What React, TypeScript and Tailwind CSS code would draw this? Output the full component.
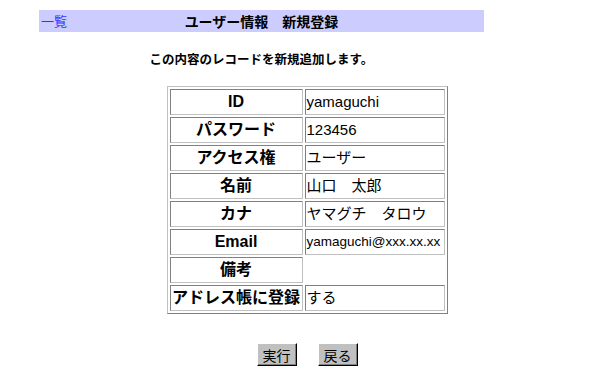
import React from "react";

type Row = {
  label: string;
  value: string;
  small?: boolean;
};

const rows: Row[] = [
  { label: "ID", value: "yamaguchi" },
  { label: "パスワード", value: "123456" },
  { label: "アクセス権", value: "ユーザー" },
  { label: "名前", value: "山口　太郎" },
  { label: "カナ", value: "ヤマグチ　タロウ" },
  { label: "Email", value: "yamaguchi@xxx.xx.xx", small: true },
  { label: "備考", value: "" },
  { label: "アドレス帳に登録", value: "する" },
];

const cellBorder =
  "border border-t-[#808080] border-l-[#808080] border-b-[#c0c0c0] border-r-[#c0c0c0]";

function WinButton({ children }: { children: React.ReactNode }) {
  return (
    <button
      type="button"
      className="h-[23px] px-[5px] bg-[#c0c0c0] border border-t-white border-l-white border-b-black border-r-black shadow-[inset_-1px_-1px_0_#808080] text-[14px] leading-[20px] text-black font-['Noto_Sans_CJK_JP',sans-serif]"
    >
      {children}
    </button>
  );
}

export default function App() {
  return (
    <div className="w-[614px] h-[376px] bg-white text-black font-['Liberation_Sans','Noto_Sans_CJK_JP',sans-serif]">
      <div className="pt-[10px] pl-[39px]">
        <div className="w-[445px] h-[22px] bg-[#ccccff] grid grid-cols-[1fr_auto_1fr] items-center">
          <a href="#" className="pl-[2px] text-[13px] leading-[22px] text-[#3333ff] font-['Noto_Sans_CJK_JP',sans-serif]">
            一覧
          </a>
          <h1 className="text-[14px] leading-[22px] font-bold font-['Noto_Sans_CJK_JP',sans-serif] whitespace-nowrap">
            ユーザー情報　新規登録
          </h1>
          <div />
        </div>
        <p className="w-[445px] mt-[20px] h-[14px] text-center text-[12.5px] leading-[14px] font-bold font-['Noto_Sans_CJK_JP',sans-serif]">
          この内容のレコードを新規追加します。
        </p>
      </div>

      <table className="mx-auto mt-[20px] border-separate border-spacing-[2px] border border-t-[#c0c0c0] border-l-[#c0c0c0] border-b-[#808080] border-r-[#808080]">
        <tbody>
          {rows.map((row) => (
            <tr key={row.label}>
              <td
                className={`${cellBorder} w-[133px] h-[26px] p-[1px] text-center align-middle text-[16px] leading-[20px] font-bold whitespace-nowrap`}
              >
                {row.label}
              </td>
              {/* empty cells show no border, like the old table */}
              <td
                className={`${
                  row.value ? cellBorder : "border border-transparent"
                } w-[140px] h-[26px] p-[1px] text-left align-middle leading-[20px] whitespace-nowrap ${
                  row.small ? "text-[13.5px]" : "text-[15px]"
                }`}
              >
                {row.value}
              </td>
            </tr>
          ))}
        </tbody>
      </table>

      <div className="mt-[29px] flex justify-center gap-[21px]">
        <WinButton>実行</WinButton>
        <WinButton>戻る</WinButton>
      </div>
    </div>
  );
}
